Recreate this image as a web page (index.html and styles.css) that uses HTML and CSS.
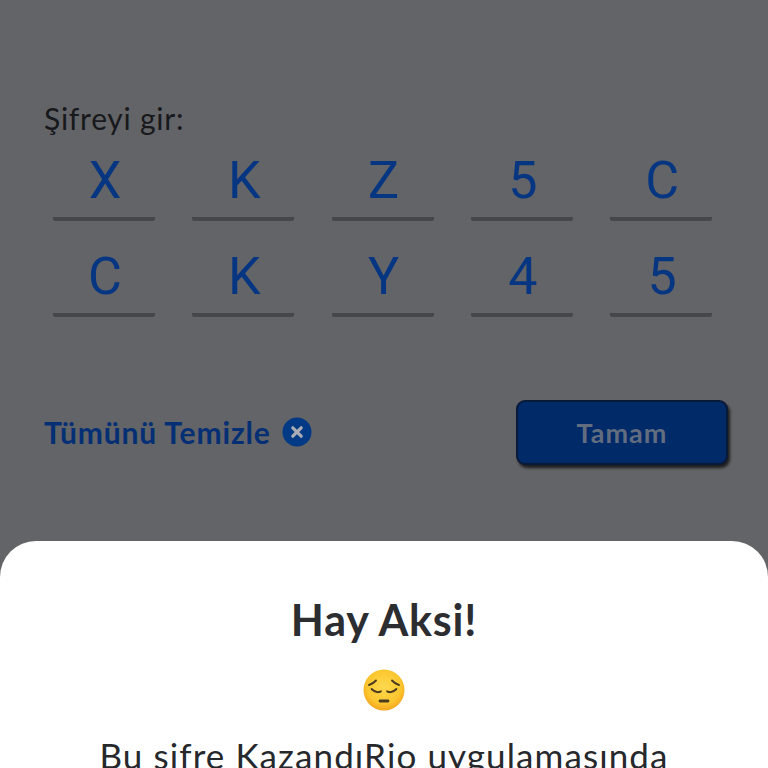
FILE: index.html
```html
<!DOCTYPE html>
<html lang="tr">
<head>
<meta charset="utf-8">
<title>Şifreyi gir</title>
<link rel="stylesheet" href="styles.css">
</head>
<body>
<div class="screen">
  <main class="form">
    <p class="label">Şifreyi gir:</p>
    <div class="code-grid">
      <div class="cell">X</div><div class="cell">K</div><div class="cell">Z</div><div class="cell">5</div><div class="cell">C</div>
      <div class="cell">C</div><div class="cell">K</div><div class="cell">Y</div><div class="cell">4</div><div class="cell">5</div>
    </div>
    <div class="actions">
      <div class="clear">
        <span class="clear-text">Tümünü Temizle</span>
        <svg class="clear-icon" viewBox="0 0 30 30" aria-hidden="true">
          <circle cx="15" cy="15" r="14.5" fill="#023a85"/>
          <path d="M10.800 10.800l8.400 8.400M19.200 10.800l-8.400 8.400" stroke="#a9adb5" stroke-width="3.200" stroke-linecap="round"/>
        </svg>
      </div>
      <button class="ok" type="button">Tamam</button>
    </div>
  </main>
  <section class="sheet">
    <h1 class="sheet-title">Hay Aksi!</h1>
    <svg class="emoji" viewBox="0 0 42 42" aria-hidden="true">
      <defs>
        <radialGradient id="face" cx="50%" cy="42%" r="58%">
          <stop offset="0%" stop-color="#fdd94f"/>
          <stop offset="72%" stop-color="#fbc62e"/>
          <stop offset="100%" stop-color="#f3a41c"/>
        </radialGradient>
      </defs>
      <circle cx="21" cy="21" r="20.500" fill="url(#face)"/>
      <g fill="none" stroke="#4a3a20" stroke-width="1.900" stroke-linecap="round">
        <path d="M6 16q4-1.200 7-4.500"/>
        <path d="M36 16q-4-1.200-7-4.500"/>
        <path d="M8.600 20q4.500 4.800 9.300 2.300"/>
        <path d="M33.400 20q-4.500 4.800-9.300 2.300"/>
        <path d="M17 32h8" stroke-width="2.800"/>
      </g>
    </svg>
    <p class="sheet-text">Bu şifre KazandıRio uygulamasında</p>
  </section>
</div>
</body>
</html>
```
FILE: styles.css
```css
html, body {
  margin: 0;
  padding: 0;
  height: 768px;
  overflow: hidden;
}
.screen {
  width: 768px;
  height: 768px;
  display: flex;
  flex-direction: column;
  overflow: hidden;
  background: #636467;
  font-family: "Lato", "Open Sans", sans-serif;
}
.form {
  height: 541px;
  flex: none;
  box-sizing: border-box;
  padding: 101px 40px 0 44px;
}
.label {
  margin: 0;
  font-size: 30px;
  line-height: 34px;
  letter-spacing: .75px;
  color: #17191c;
}
.code-grid {
  display: grid;
  grid-template-columns: repeat(5, 102px);
  column-gap: 37.300px;
  row-gap: 15.700px;
  margin: 6px 0 0 9px;
}
.cell {
  height: 71px;
  padding-top: 5px;
  border-bottom: 4px solid #45474b;
  border-radius: 0 0 2px 2px;
  text-align: center;
  text-indent: 2px;
  font-family: "Roboto", sans-serif;
  font-size: 52px;
  line-height: 70px;
  color: #063681;
}
.actions {
  display: flex;
  align-items: center;
  justify-content: space-between;
  margin-top: 83px;
}
.clear {
  display: flex;
  align-items: center;
  gap: 11px;
}
.clear-text {
  font-size: 30px;
  font-weight: 700;
  letter-spacing: .85px;
  color: #052f74;
}
.clear-icon {
  width: 30px;
  height: 30px;
}
.ok {
  width: 212px;
  height: 65px;
  padding: 0;
  box-sizing: border-box;
  background: #012a69;
  border: 2px solid #08193a;
  border-radius: 9px;
  box-shadow: 2px 3px 3px rgba(0, 0, 0, .7);
  font-family: inherit;
  font-size: 27px;
  font-weight: 700;
  letter-spacing: 1px;
  color: #626d80;
}
.sheet {
  flex: 1;
  min-height: 0;
  background: #fff;
  border-radius: 36px 36px 0 0;
  display: flex;
  flex-direction: column;
  align-items: center;
  padding-top: 54px;
  overflow: hidden;
}
.sheet-title {
  margin: 0;
  font-size: 43px;
  line-height: 50px;
  font-weight: 700;
  letter-spacing: .8px;
  color: #2c2d31;
}
.emoji {
  width: 42px;
  height: 42px;
  margin-top: 24px;
  flex: none;
}
.sheet-text {
  margin: 25px 0 0;
  font-size: 35px;
  line-height: 38px;
  letter-spacing: 1.100px;
  white-space: nowrap;
  color: #26282c;
}
```
